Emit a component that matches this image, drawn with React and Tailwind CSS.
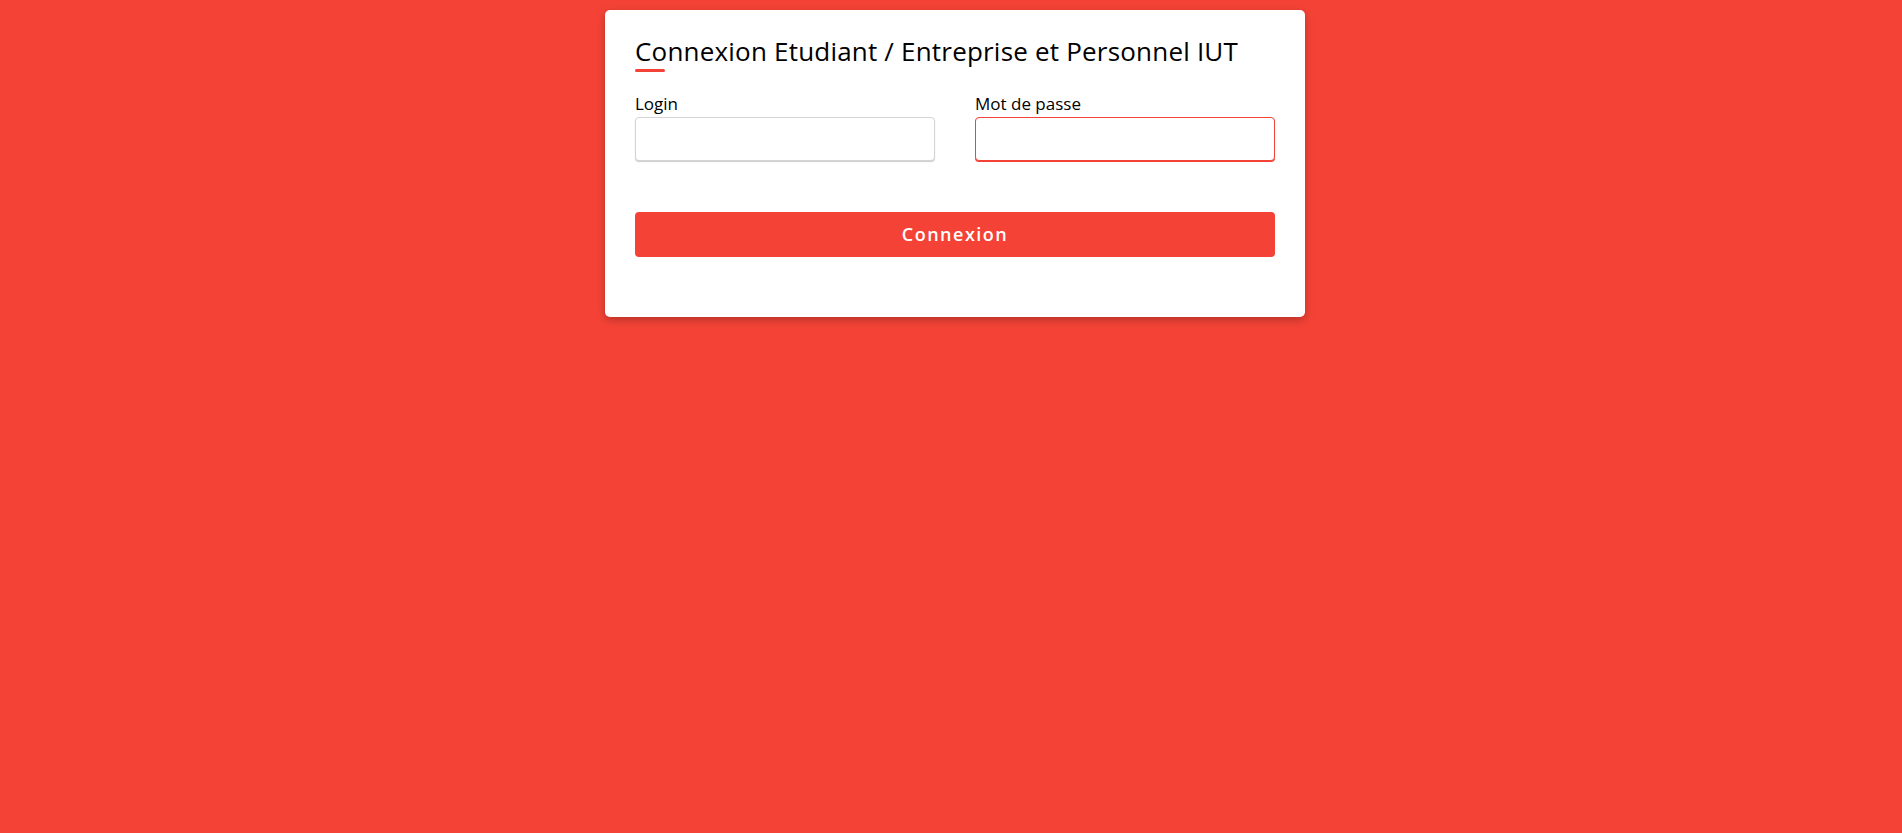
export default function App() {
  return (
    <div
      className="flex min-h-screen w-full justify-center bg-[#f44336] pt-[10px] pl-[8px]"
      style={{ fontFamily: '"Open Sans", "Noto Sans", sans-serif' }}
    >
      <div className="h-fit w-[700px] rounded-[5px] bg-white px-[30px] pt-[24px] pb-[60px] shadow-[0_3px_8px_rgba(0,0,0,0.25)]">
        {/* Title */}
        <h1 className="text-[26px] leading-[34px] font-medium tracking-[0.2px] text-black">
          Connexion Etudiant / Entreprise et Personnel IUT
        </h1>
        <div className="mt-[1px] h-[3px] w-[30px] rounded-full bg-[#f44336]" />

        {/* Fields */}
        <div className="mt-[20px] grid grid-cols-2 gap-[40px]">
          <div>
            <label className="block text-[17px] leading-[24px] text-black">Login</label>
            <input
              type="text"
              className="mt-[1px] block h-[44px] w-full rounded-[4px] border border-[#d4d4d4] bg-white px-3 shadow-[0_1px_1px_rgba(0,0,0,0.2)] outline-none"
            />
          </div>
          <div>
            <label className="block text-[17px] leading-[24px] text-black">Mot de passe</label>
            <input
              type="password"
              className="mt-[1px] block h-[44px] w-full rounded-[4px] border border-[#f44336] bg-white px-3 shadow-[0_1px_0_#f44336] outline-none"
            />
          </div>
        </div>

        {/* Button */}
        <button className="mt-[51px] block h-[45px] w-full rounded-[4px] bg-[#f44336] text-[18px] font-semibold tracking-[1.5px] text-white">
          Connexion
        </button>
      </div>
    </div>
  );
}
